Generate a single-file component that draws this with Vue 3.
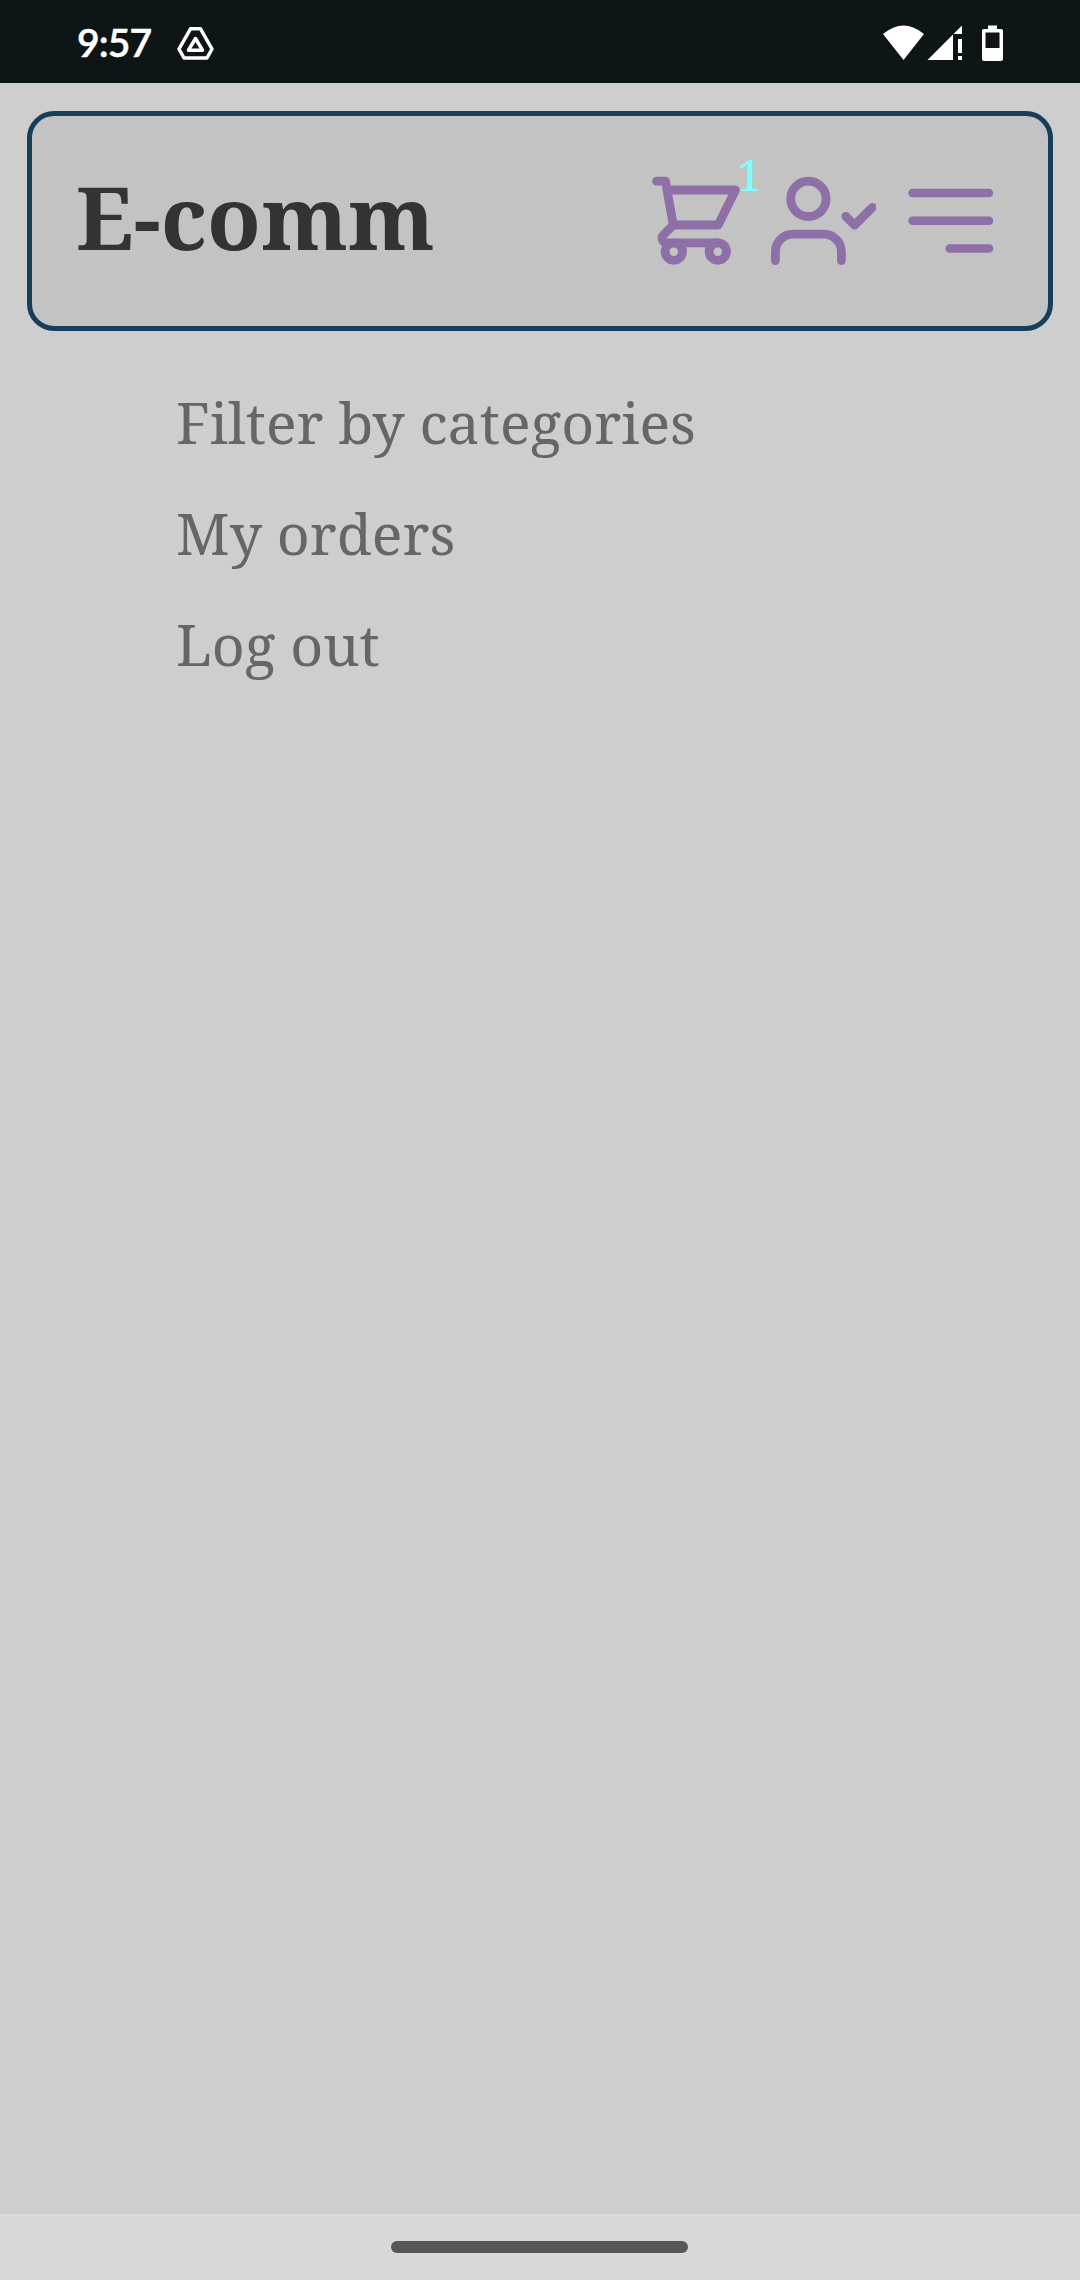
<script setup>
const links = ['Filter by categories', 'My orders', 'Log out']
const cartCount = 1
</script>

<template>
  <div class="screen">
    <header class="status">
      <span class="time">9:57</span>
      <svg class="drive" width="40" height="36" viewBox="176 26 40 36" fill="none" stroke="#fff">
        <path d="M190.500 28.800H200.500L212 49L207 58H184L179 49Z" stroke-width="3.500" stroke-linejoin="round" />
        <path d="M195.500 38.500L202.500 50.200H188.500Z" stroke-width="3.500" stroke-linejoin="round" />
      </svg>
      <svg class="system" width="122" height="38" viewBox="882 24 122 38" fill="#fff">
        <path d="M883 34Q903.500 17 924 34L903.500 60Z" />
        <path d="M927.500 60L953 34.500V60ZM953.500 34L962 25.500V34ZM958 39H962V53H958ZM958 56H962V60H958Z" />
        <path fill-rule="evenodd" d="M988 25.500H997V29H1001Q1003 29 1003 31V59Q1003 61 1001 61H984Q982 61 982 59V31Q982 29 984 29H988ZM985.500 32.500V48H999.500V32.500Z" />
      </svg>
    </header>

    <main class="content">
      <nav class="navbar">
        <h1 class="brand">E-comm</h1>
        <div class="actions">
          <div class="cart">
            <svg width="92" height="92" viewBox="650 174 92 92">
              <path d="M656.500 181.200H665.500L673.300 225H718.200L735.500 190H668" />
              <path d="M673.300 225L663.500 234.800C660.500 238 662.500 242.800 667 242.800H717.700" />
              <circle cx="673.800" cy="251.600" r="8.700" />
              <circle cx="717.800" cy="251.600" r="8.700" />
            </svg>
            <span class="count">{{ cartCount }}</span>
          </div>
          <svg class="user" width="106" height="92" viewBox="770 174 106 92">
            <circle cx="808.400" cy="198.800" r="17.700" />
            <path d="M775.400 260.600V251.800A17.600 17.600 0 0 1 793 234.200H823.800A17.600 17.600 0 0 1 841.400 251.800V260.600" />
            <path d="M845.800 216.300L854.600 225.100L872.300 207.400" />
          </svg>
          <svg class="menu" width="86" height="92" viewBox="908 174 86 92">
            <path d="M912.500 193H989M912.500 220.700H989M949.700 248.400H989" />
          </svg>
        </div>
      </nav>

      <ul class="links">
        <li v-for="link in links" :key="link">{{ link }}</li>
      </ul>
    </main>

    <footer class="gesture"><div class="pill"></div></footer>
  </div>
</template>

<style>
body {
  margin: 0;
}
</style>

<style scoped>
.screen {
  display: flex;
  flex-direction: column;
  width: 1080px;
  height: 2280px;
  overflow: hidden;
  background: #cecece;
  font-family: "Noto Serif", "DejaVu Serif Condensed", "DejaVu Serif", serif;
}
.status {
  display: flex;
  flex: none;
  height: 83px;
  box-sizing: border-box;
  padding: 24px 76px 0 77px;
  background: #0d1517;
  color: #fff;
}
.time {
  width: 99px;
  margin-top: -1px;
  font: 600 39px/38px Lato, sans-serif;
  letter-spacing: -0.9px;
  -webkit-text-stroke: 0.5px #fff;
}
.drive {
  margin-top: 2px;
}
.system {
  margin-left: auto;
}
.content {
  flex: 1;
}
.navbar {
  display: flex;
  box-sizing: border-box;
  height: 220px;
  margin: 28px 27px 0;
  padding: 0 54px 0 44px;
  justify-content: space-between;
  border: 5px solid #173f5a;
  border-radius: 27px;
  background: #c3c3c3;
}
.brand {
  margin: 45px 0 0;
  color: #333;
  font-size: 88px;
  font-weight: 700;
  line-height: 110px;
  white-space: nowrap;
}
.actions {
  display: flex;
  margin-top: 58px;
  fill: none;
  stroke: #8e6fa8;
  stroke-width: 8.8;
  stroke-linecap: round;
  stroke-linejoin: round;
}
.actions svg {
  display: block;
}
.cart {
  position: relative;
}
.count {
  position: absolute;
  top: -30px;
  left: 87px;
  color: #7ffcff;
  font-size: 44px;
  line-height: 60px;
}
.user {
  margin-left: 28px;
}
.menu {
  margin-left: 32px;
  stroke-width: 8.5;
}
.links {
  margin: 36px 0 0;
  padding: 0 0 0 176px;
  list-style: none;
  color: #666;
  font-size: 57.200px;
  line-height: 111px;
}
.gesture {
  display: flex;
  flex: none;
  height: 66px;
  justify-content: center;
  background: #d9d9d9;
}
.pill {
  width: 297px;
  height: 12px;
  margin: 27px 1px 0 0;
  border-radius: 6px;
  background: #575757;
}
</style>
